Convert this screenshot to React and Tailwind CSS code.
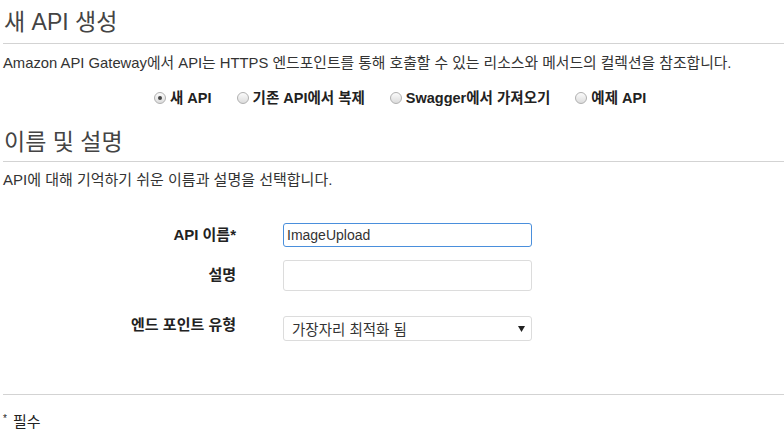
import { useState } from "react";

/** 새 API 생성 화면 */
function Radio({ checked, label, onClick }) {
    return (
        <label className="flex items-center cursor-pointer" onClick={onClick}>
            <span className="w-[12px] h-[12px] rounded-full border border-[#b0b0b0] bg-gradient-to-b from-[#fbfbfb] to-[#dcdcdc] flex items-center justify-center">
                {checked && <span className="w-[4px] h-[4px] rounded-full bg-[#444]" />}
            </span>
            <span className="ml-[4px] font-bold text-[14.5px] text-[#222]">{label}</span>
        </label>
    );
}

export default function App() {
    const [mode, setMode] = useState("new");
    const [name, setName] = useState("ImageUpload");
    const [desc, setDesc] = useState("");

    const options = [
        { key: "new", label: "새 API" },
        { key: "clone", label: "기존 API에서 복제" },
        { key: "swagger", label: "Swagger에서 가져오기" },
        { key: "example", label: "예제 API" },
    ];

    return (
        <div className="w-[784px] h-[446px] overflow-hidden bg-white pl-[3px] font-['Liberation_Sans','Noto_Sans_CJK_KR',sans-serif] text-[#333]">
            {/* Header */}
            <h1 className="mt-[8px] pl-[1px] pb-[7px] text-[23px] leading-[28px] text-[#444] border-b border-[#d3d3d3]">
                새 API 생성
            </h1>
            <p className="mt-[10px] text-[14.8px] leading-[18px]">
                Amazon API Gateway에서 API는 HTTPS 엔드포인트를 통해 호출할 수 있는 리소스와 메서드의 컬렉션을 참조합니다.
            </p>

            {/* Source options */}
            <div className="mt-[17px] h-[18px] pl-[151px] flex items-center gap-[25px] leading-[18px]">
                {options.map((o) => (
                    <Radio
                        key={o.key}
                        label={o.label}
                        checked={mode === o.key}
                        onClick={() => setMode(o.key)}
                    />
                ))}
            </div>

            {/* Name & description */}
            <h2 className="mt-[21px] pl-[1px] pb-[5px] text-[23px] leading-[28px] text-[#444] border-b border-[#d3d3d3]">
                이름 및 설명
            </h2>
            <p className="mt-[9px] text-[15px] leading-[18px]">
                API에 대해 기억하기 쉬운 이름과 설명을 선택합니다.
            </p>

            <div className="mt-[34px]">
                <div className="flex items-center h-[24px]">
                    <div className="w-[233px] text-right font-bold text-[15px] text-[#222]">API 이름*</div>
                    <input
                        value={name}
                        onChange={(e) => setName(e.target.value)}
                        className="ml-[47px] w-[249px] h-[24px] px-[3px] rounded-[3px] border border-[#4a8fdc] text-[14px] text-[#333] outline-none"
                    />
                </div>
                <div className="flex items-center h-[31px] mt-[13px]">
                    <div className="w-[233px] text-right font-bold text-[15px] text-[#222]">설명</div>
                    <input
                        value={desc}
                        onChange={(e) => setDesc(e.target.value)}
                        className="ml-[47px] w-[249px] h-[31px] px-[3px] rounded-[3px] border border-[#dcdcdc] text-[14px] outline-none"
                    />
                </div>
                <div className="flex items-center h-[25px] mt-[25px]">
                    <div className="w-[233px] pb-[7px] text-right font-bold text-[15px] text-[#222]">엔드 포인트 유형</div>
                    <div className="ml-[47px] w-[249px] h-[25px] rounded-[3px] border border-[#dcdcdc] flex items-center justify-between pl-[8px] pr-[6px]">
                        <span className="text-[14.5px] leading-[18px] text-[#333] pt-[3px]">가장자리 최적화 됨</span>
                        <svg width="7" height="7" viewBox="0 0 7 7">
                            <path d="M0 1 H7 L3.5 7 Z" fill="#222" />
                        </svg>
                    </div>
                </div>
            </div>

            {/* Footer */}
            <div className="mt-[53px] border-t border-[#d3d3d3]" />
            <div className="mt-[18px] text-[15px] leading-[18px] text-[#222] flex items-start">
                <span className="text-[10px] leading-[12px]">*</span>
                <span className="ml-[6px]">필수</span>
            </div>
        </div>
    );
}
